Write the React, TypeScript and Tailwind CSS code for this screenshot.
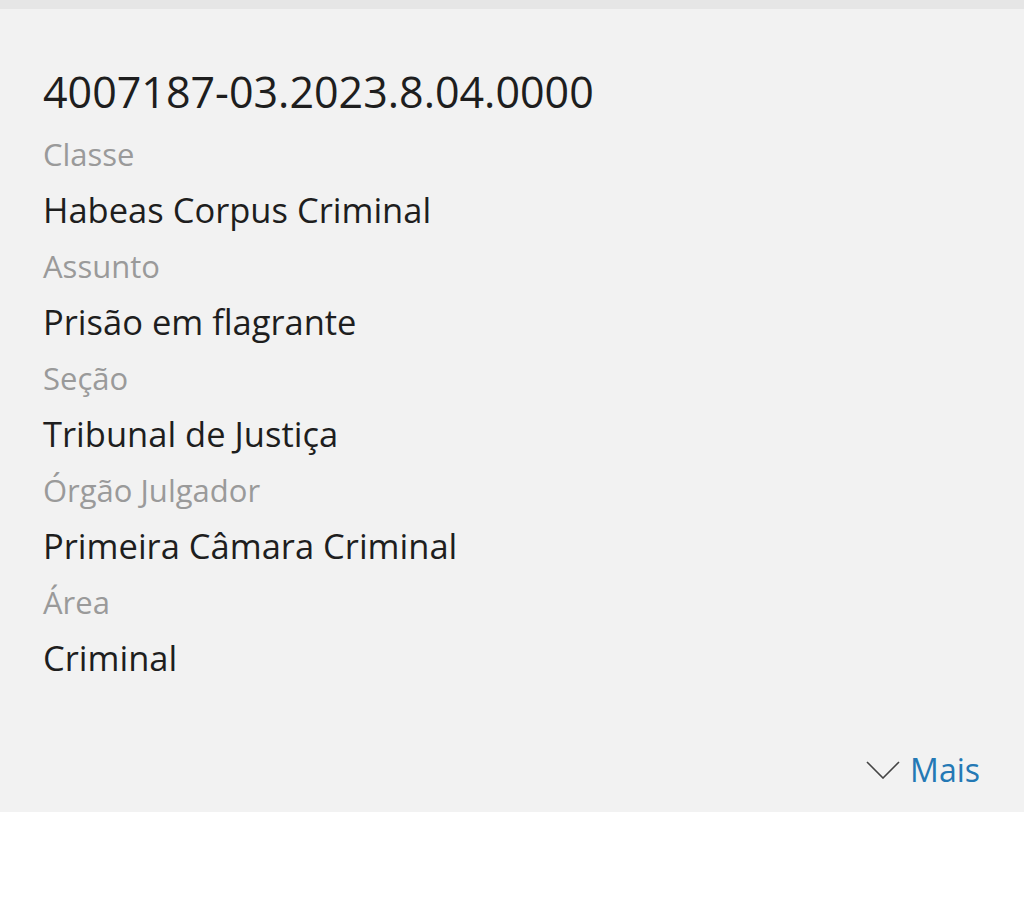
const fields = [
  { label: "Classe", value: "Habeas Corpus Criminal" },
  { label: "Assunto", value: "Prisão em flagrante" },
  { label: "Seção", value: "Tribunal de Justiça" },
  { label: "Órgão Julgador", value: "Primeira Câmara Criminal" },
  { label: "Área", value: "Criminal" },
];

export default function App() {
  return (
    <div className="w-[1024px] h-[902px] bg-white font-['Open_Sans',sans-serif]">
      <div className="h-[9px] bg-[#e6e6e6]" />
      <section className="bg-[#f2f2f2]">
        <div className="px-[43px] pt-[55px]">
          <h1 className="text-[43px] leading-[56px] text-[#1e1e1e] mb-[6px]">
            4007187-03.2023.8.04.0000
          </h1>
          <dl>
            {fields.map((f) => (
              <div key={f.label}>
                <dt className="text-[31px] leading-[56px] text-[#9a9a9a]">{f.label}</dt>
                <dd className="text-[34.5px] leading-[56px] text-[#1e1e1e]">{f.value}</dd>
              </div>
            ))}
          </dl>
        </div>
        <div className="flex justify-end px-[44px] pt-[56px] pb-[14px]">
          <button className="flex items-center gap-[10px] h-[56px]">
            <svg width="34" height="18" viewBox="0 0 34 18" fill="none" stroke="#444" strokeWidth="1.6">
              <path d="M1 1l16 16L33 1" />
            </svg>
            <span className="text-[32px] text-[#2479b5]">Mais</span>
          </button>
        </div>
      </section>
    </div>
  );
}
